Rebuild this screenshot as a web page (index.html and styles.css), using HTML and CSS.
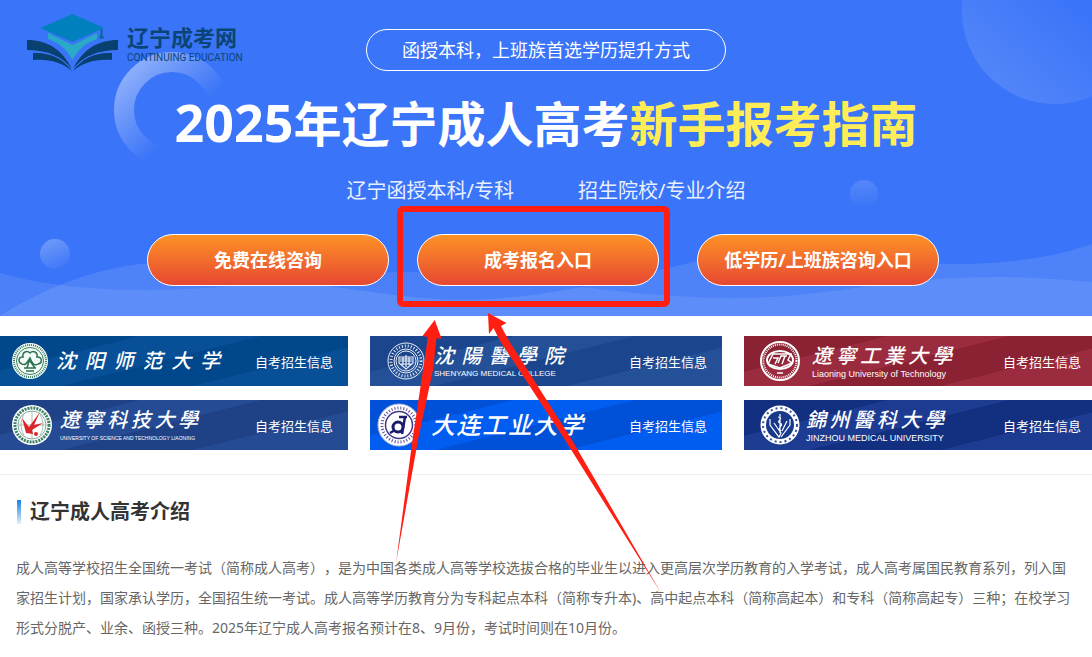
FILE: index.html
```html
<!DOCTYPE html>
<html lang="zh-CN">
<head>
<meta charset="utf-8">
<meta name="viewport" content="width=device-width, initial-scale=1">
<title>2025年辽宁成人高考新手报考指南</title>
<link rel="stylesheet" href="styles.css">
</head>
<body>
<header class="hero">
  <svg class="hero-art" viewBox="0 0 1092 316" preserveAspectRatio="xMidYMax slice" aria-hidden="true">
    <defs>
      <linearGradient id="ringFade" gradientUnits="userSpaceOnUse" x1="128" y1="62" x2="186" y2="122"><stop offset="0" stop-color="#fff" stop-opacity=".46"/><stop offset="1" stop-color="#fff" stop-opacity="0"/></linearGradient>
      <linearGradient id="moonFade" x1=".15" y1=".85" x2=".55" y2=".4"><stop offset="0" stop-color="#fff" stop-opacity=".12"/><stop offset="1" stop-color="#fff" stop-opacity="0"/></linearGradient>
      <linearGradient id="dotFade" x1=".3" y1="0" x2=".7" y2="1"><stop offset="0" stop-color="#fff" stop-opacity=".27"/><stop offset="1" stop-color="#fff" stop-opacity=".02"/></linearGradient>
      <linearGradient id="dotFaint" x1=".4" y1="0" x2=".5" y2="1"><stop offset="0" stop-color="#fff" stop-opacity=".14"/><stop offset="1" stop-color="#fff" stop-opacity="0"/></linearGradient>
    </defs>
    <path d="M0 273C45 286 95 290 150 290C245 290 310 272 400 272C480 272 540 282 600 289C650 295 710 300 770 297C850 292 900 277 995 277C1035 277 1065 280 1092 282V316H0Z" fill="#fff" fill-opacity=".09"/>
    <path d="M0 316C20 303 40 293 60 285C90 273 125 263 170 262C240 260 290 282 350 289C400 296 440 302 490 299C570 294 640 274 698 261C770 247 850 264 965 264C1020 263 1060 255 1092 244V316H0Z" fill="#fff" fill-opacity=".1"/>
    <circle cx="172" cy="110" r="48" fill="none" stroke="url(#ringFade)" stroke-width="20"/>
    <circle cx="1055" cy="11" r="93" fill="url(#moonFade)"/>
    <circle cx="55" cy="254" r="15" fill="url(#dotFade)"/>
    <circle cx="864" cy="194" r="14" fill="url(#dotFaint)"/>
  </svg>
  <div class="hero-top">
    <a class="brand" href="#">
      <svg class="brand-mark" viewBox="0 0 91 57" aria-hidden="true">
        <path d="M0 26C20 26 35 35 45 55C35 42 20 36 0 36Z" fill="#08406f"/>
        <path d="M91 26C71 26 56 35 46 55C56 42 71 36 91 36Z" fill="#08406f"/>
        <path d="M6 39C22 38 36 44 45 57C34 48 23 45 6 46Z" fill="#08406f"/>
        <path d="M85 39C69 38 55 44 46 57C57 48 68 45 85 46Z" fill="#08406f"/>
        <path d="M21 19L45.500 31L70 19V25C58 29 51 36 45.500 46C40 36 33 29 21 25Z" fill="#2aa9c9"/>
        <path d="M45.500 0L77 14L45.500 28L13.500 14Z" fill="#0080bd"/>
        <path d="M74 15V21L72.500 24H76.500L75 21V15" fill="#08679a" stroke="#08679a"/>
      </svg>
      <span class="brand-text">
        <strong class="brand-name">辽宁成考网</strong>
        <span class="brand-en">CONTINUING EDUCATION</span>
      </span>
    </a>
    <p class="pill">函授本科，上班族首选学历提升方式</p>
  </div>
  <h1 class="title"><span class="title-year">2025</span>年辽宁成人高考<em class="title-mark">新手报考指南</em></h1>
  <p class="subtitle"><span>辽宁函授本科/专科</span><span>招生院校/专业介绍</span></p>
  <nav class="actions">
    <a class="action" href="#">免费在线咨询</a>
    <a class="action" href="#">成考报名入口</a>
    <a class="action action-last" href="#">低学历/上班族咨询入口</a>
  </nav>
</header>

<main>
  <section class="schools" aria-label="自考院校">
    <div class="school-grid">
      <a class="school synu" href="#">
        <svg class="seal" viewBox="0 0 44 44" aria-hidden="true">
          <circle cx="22" cy="22" r="18" fill="#f4faf6"/><circle cx="22" cy="22" r="16" fill="none" stroke="#367e61" stroke-width="2" stroke-dasharray="1 1"/><circle cx="22" cy="22" r="13.500" fill="none" stroke="#367e61"/>
          <path d="M14 25C9 23 11 17 15 18C14 13 19 11 22 14C25 11 30 13 29 18C34 17 35 24 30 25M14 25C17 27 19 24 22 19C24 25 27 27 30 25M16 29H28M18 32H26M22 19L19 29M22 22L27 29" fill="none" stroke="#2a7252" stroke-width="1.500"/>
        </svg>
        <span class="school-title"><span class="school-name">沈阳师范大学</span></span>
        <span class="school-info">自考招生信息</span>
      </a>
      <a class="school symc" href="#">
        <svg class="seal" viewBox="0 0 44 44" fill="none" stroke="#e8eef8" aria-hidden="true">
          <circle cx="22" cy="22" r="18"/><circle cx="22" cy="22" r="15" stroke-width="3" stroke-dasharray="1 2"/><circle cx="22" cy="22" r="12"/><circle cx="22" cy="22" r="10"/>
          <path d="M15 18H29V24L22 30L15 24ZM16 20H28M16 22H28M19 18V26M22 16V28M25 18V26M17 25H27" stroke-width="1.200"/>
        </svg>
        <span class="school-title"><span class="school-name">沈陽醫學院</span><span class="school-en">SHENYANG MEDICAL COLLEGE</span></span>
        <span class="school-info">自考招生信息</span>
      </a>
      <a class="school lnut" href="#">
        <svg class="seal" viewBox="0 0 44 44" fill="none" stroke="#fff" aria-hidden="true">
          <circle cx="22" cy="22" r="19" stroke-width="2"/><circle cx="22" cy="22" r="16.500" stroke-width="2" stroke-dasharray="1 1"/>
          <ellipse cx="22" cy="21" rx="13" ry="9" stroke-width="2"/><path d="M10 25L15 15H33L30 21L34 24L22 29L10 25M15 19H20L17 25M20 24L23 17H29M24 25L27 17M19 34H25" stroke-width="1.500"/>
        </svg>
        <span class="school-title"><span class="school-name">遼寧工業大學</span><span class="school-en">Liaoning University of Technology</span></span>
        <span class="school-info">自考招生信息</span>
      </a>
      <a class="school ustl" href="#">
        <svg class="seal" viewBox="0 0 44 44" fill="none" aria-hidden="true">
          <circle cx="22" cy="22" r="20" fill="#fff"/><circle cx="22" cy="22" r="17" stroke="#3b8065" stroke-width="3" stroke-dasharray="2 1"/><circle cx="22" cy="22" r="14" fill="#fff" stroke="#7aa697"/>
          <path d="M8 22H36M22 8V36M14 12C10 18 10 26 14 32M30 12C34 18 34 26 30 32" stroke="#a4bdb5"/>
          <path d="M12 15L19 24L30 9L24 22L33 20L22 27L23 31L16 30Z" fill="#dc242b"/><circle cx="26" cy="31" r="2" fill="#dc242b"/>
        </svg>
        <span class="school-title"><span class="school-name">遼寧科技大學</span><span class="school-en">UNIVERSITY OF SCIENCE AND TECHNOLOGY LIAONING</span></span>
        <span class="school-info">自考招生信息</span>
      </a>
      <a class="school dlpu" href="#">
        <svg class="seal" viewBox="0 0 44 44" fill="none" aria-hidden="true">
          <circle cx="22" cy="22" r="21" fill="#fff" stroke="#b6bddf"/><circle cx="22" cy="22" r="17" stroke="#554c95" stroke-width="3" stroke-dasharray="1 2"/><circle cx="22" cy="22" r="13.500" stroke="#423889" stroke-width="1.500"/>
          <ellipse cx="21" cy="24" rx="5" ry="5" stroke="#1b1c6d" stroke-width="3"/><path d="M22 14H30M28 14L25 31M13 30L18 27" stroke="#1b1c6d" stroke-width="2.500"/>
        </svg>
        <span class="school-title"><span class="school-name">大连工业大学</span></span>
        <span class="school-info">自考招生信息</span>
      </a>
      <a class="school jzmu" href="#">
        <svg class="seal" viewBox="0 0 44 44" fill="none" aria-hidden="true">
          <circle cx="22" cy="22" r="19.500" fill="#fff"/><circle cx="22" cy="22" r="17" stroke="#35549d" stroke-width="2" stroke-dasharray="2 3"/><circle cx="22" cy="22" r="14" fill="#18388b"/>
          <path d="M12 16V22L21 34L23 30L16 20M32 16V22L23 34M29 18L24 28M22 11V30M20 14C27 15 17 19 22 20C27 22 18 25 23 28" stroke="#fff" stroke-width="1.200"/>
        </svg>
        <span class="school-title"><span class="school-name">錦州醫科大學</span><span class="school-en">JINZHOU MEDICAL UNIVERSITY</span></span>
        <span class="school-info">自考招生信息</span>
      </a>
    </div>
  </section>

  <article class="intro">
    <h2 class="intro-title">辽宁成人高考介绍</h2>
    <p class="intro-text">成人高等学校招生全国统一考试（简称成人高考），是为中国各类成人高等学校选拔合格的毕业生以进入更高层次学历教育的入学考试，成人高考属国民教育系列，列入国家招生计划，国家承认学历，全国招生统一考试。成人高等学历教育分为专科起点本科（简称专升本)、高中起点本科（简称高起本）和专科（简称高起专）三种；在校学习形式分脱产、业余、函授三种。2025年辽宁成人高考报名预计在8、9月份，考试时间则在10月份。</p>
  </article>
</main>

<svg class="callout" viewBox="0 0 280 400" aria-hidden="true">
  <rect x="5" y="9" width="267" height="95" rx="3" fill="none" stroke="#ff1f12" stroke-width="6"/>
  <path d="M39.700 120L46.700 139L41.500 138L38 170L23 240L1 363L17.500 240L31 150L32.700 137L27.500 136Z" fill="#ff1f12"/>
  <path d="M93 113L111.500 123L106 126L113.500 140L177 240L266 393L170 240L104.500 140L98.500 128L94 134Z" fill="#ff1f12"/>
</svg>
</body>
</html>
```
FILE: styles.css
```css
* {
  box-sizing: border-box;
}

body {
  position: relative;
  margin: 0;
  overflow-x: hidden;
  background: #fff;
  color: #666;
  font-family: "Noto Sans", "Noto Sans CJK SC", sans-serif;
  font-size: 14px;
  text-spacing-trim: space-all;
}

h1, h2, p {
  margin: 0;
}

a {
  color: inherit;
  text-decoration: none;
}

/* Hero */

.hero {
  position: relative;
  padding: 14px 0 30px;
  background: #3a74f8;
  color: #fff;
}

.hero-art {
  position: absolute;
  inset: 0;
  width: 100%;
  height: 100%;
}

.hero-top,
.title,
.subtitle,
.actions {
  position: relative;
}

.hero-top {
  display: grid;
  grid-template-columns: 1fr auto 1fr;
  align-items: end;
}

.brand {
  display: flex;
  gap: 9px;
  padding-left: 27px;
  color: #0b4476;
}

.brand-mark {
  width: 91px;
  height: 57px;
}

.brand-text {
  display: flex;
  flex-direction: column;
  gap: 2px;
  padding-top: 11px;
  white-space: nowrap;
}

.brand-name {
  font-size: 22px;
  line-height: 24px;
}

.brand-en {
  font-family: Roboto, sans-serif;
  font-size: 10px;
  line-height: 14px;
}

.pill {
  padding: 0 35px;
  border: 1px solid #fff;
  border-radius: 21px;
  font-size: 18px;
  line-height: 40px;
}

.title {
  margin-top: 23px;
  font-size: 48px;
  line-height: 60px;
  text-align: center;
}

.title-year {
  font-size: 52px;
  line-height: 1;
}

.title-mark {
  color: #ffed58;
  font-style: normal;
}

.subtitle {
  display: flex;
  justify-content: center;
  gap: 64px;
  margin-top: 22px;
  color: #e8effe;
  font-size: 20px;
  line-height: 30px;
}

.actions {
  display: flex;
  justify-content: center;
  gap: 28px;
  margin-top: 28px;
}

.action {
  width: 242px;
  border: 1px solid #fff;
  border-radius: 26px;
  background: linear-gradient(#fe9226, #e64833);
  font-size: 18px;
  font-weight: 700;
  line-height: 50px;
  text-align: center;
}

.action-last {
  margin: 0 6px 0 10px;
}

/* Schools */

.schools {
  padding: 20px 0 24px;
  overflow: hidden;
  border-bottom: 1px solid #eee;
}

.school-grid {
  display: grid;
  grid-template-columns: repeat(3, 1fr);
  gap: 14px 22px;
  margin: 0 -4px;
}

.school {
  display: flex;
  align-items: center;
  height: 50px;
  padding: 0 15px 0 14px;
  background: linear-gradient(166deg, var(--deep) 26%, var(--lit) 26% 48%, var(--deep) 48% 72%, var(--lit) 72%);
  color: #fff;
}

.seal {
  flex: none;
  width: 44px;
  height: 44px;
}

.school-title {
  display: flex;
  flex-direction: column;
  margin-left: 6px;
}

.school-name {
  font-size: 20px;
  font-style: italic;
  font-weight: 500;
  line-height: 26px;
  text-align: justify;
  text-align-last: justify;
}

.school-en {
  font-family: "Liberation Sans", sans-serif;
  font-size: 9px;
  line-height: 10px;
  white-space: nowrap;
}

.school-info {
  margin-left: auto;
  font-size: 13px;
}

.synu { --deep: #00478b; --lit: #075098; }
.symc { --deep: #1b458c; --lit: #235096; }
.lnut { --deep: #8a2233; --lit: #9b2b3e; }
.ustl { --deep: #1f4287; --lit: #244b93; }
.dlpu { --deep: #0050d8; --lit: #005df0; }
.jzmu { --deep: #12307f; --lit: #1c3b91; }

.synu .school-title { width: 164px; margin-left: 4px; }
.symc .school-title { width: 130px; }
.lnut .school-title { width: 140px; margin-left: 10px; }
.ustl .school-title { width: 138px; }
.dlpu .school-title { width: 152px; margin-left: 10px; }
.jzmu .school-title { width: 138px; margin-left: 4px; }

.synu { padding-left: 12px; }
.dlpu { padding-left: 7px; }

.dlpu .school-name { font-size: 24px; }
.symc .school-en { font-size: 8px; }
.ustl .school-en { font-size: 5px; }

/* Introduction */

.intro {
  padding: 23px 16px 14px;
}

.intro-title {
  display: flex;
  align-items: center;
  gap: 9px;
  color: #333;
  font-size: 20px;
  line-height: 28px;
}

.intro-title::before {
  width: 4px;
  height: 24px;
  margin-left: 1px;
  background: linear-gradient(#1682e2, #e0effc);
  content: "";
}

.intro-text {
  margin-top: 27px;
  line-height: 30px;
}

/* Hand-drawn pointer laid over the page */

.callout {
  position: absolute;
  top: 200px;
  left: 50%;
  width: 280px;
  height: 400px;
  margin-left: -151px;
  pointer-events: none;
}
```
